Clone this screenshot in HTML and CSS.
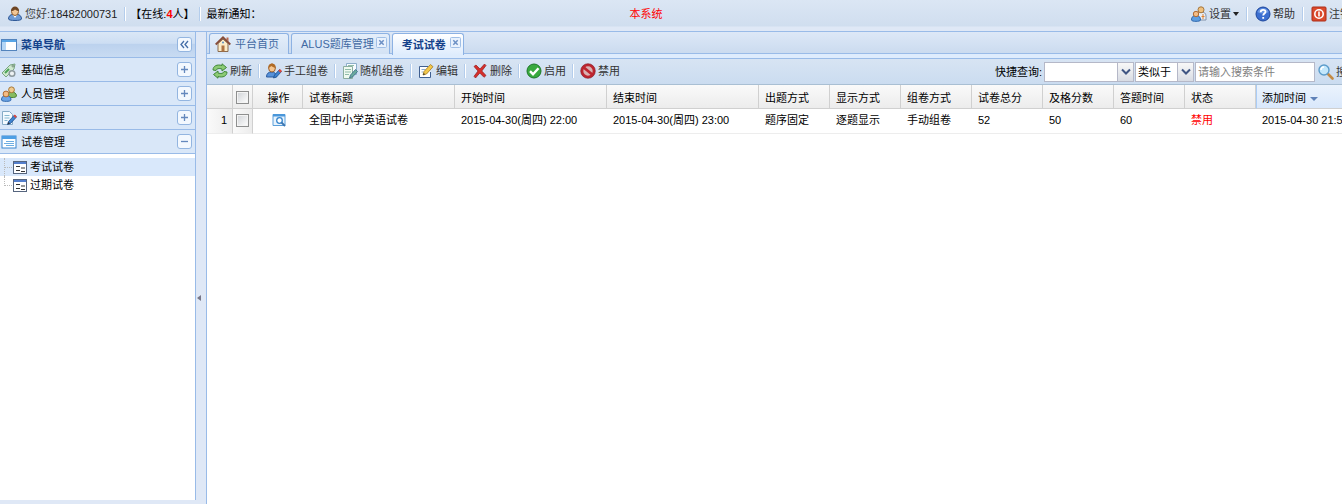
FILE: index.html
```html
<!DOCTYPE html>
<html lang="zh-CN">
<head>
  <meta charset="UTF-8">
  <meta name="viewport" content="width=device-width, initial-scale=1.0">
  <title>考试试卷</title>
  <link rel="stylesheet" href="styles.css">
</head>
<body>
  <svg class="sprite" aria-hidden="true">
    <symbol id="i-user" viewBox="0 0 16 16">
      <path d="M1.500 13c0-3 2-4.500 4-4.500h5c2 0 4 1.500 4 4.500 0 2-13 2-13 0z" fill="#6f9cd6" stroke="#2d5796"/>
      <path d="M6 9l2 3 2-3z" fill="#fff"/>
      <ellipse cx="8" cy="5.500" rx="3.500" ry="4" fill="#f3c795" stroke="#8a5a2c"/>
      <path d="M4 5c0-6 8-6 8 0-2 0-3-1-4-1.500C7 4.500 5.500 5 4 5z" fill="#6d4524"/>
    </symbol>
    <symbol id="i-users" viewBox="0 0 16 16">
      <path d="M6.500 10c0-3 1.500-4 4-4s5 1 5 4c0 2-9 2-9 0z" fill="#86bb62" stroke="#4d8433"/>
      <circle cx="10.500" cy="3.800" r="2.900" fill="#f0c98d" stroke="#a87835"/>
      <path d="M.5 14c0-3 1.500-4.500 4.500-4.500s5 1.500 5 4.500c0 1.800-9.500 1.800-9.500 0z" fill="#6ea6e6" stroke="#2f67ad"/>
      <circle cx="5" cy="8" r="2.900" fill="#f5bd85" stroke="#ae6b34"/>
    </symbol>
    <symbol id="i-setting" viewBox="0 0 16 16">
      <path d="M5 10c0-3 2-4 5-4s5 1 5 4v4H7z" fill="#e8eef5" stroke="#8292a8"/>
      <circle cx="10" cy="3.800" r="3" fill="#efc07e" stroke="#a5763d"/>
      <path d="M.5 14c0-3 1.500-4.500 4.500-4.500s4.500 1.500 4.500 4.500c0 1.800-9 1.800-9 0z" fill="#5e9ee0" stroke="#2f67ad"/>
      <circle cx="5" cy="8" r="2.700" fill="#f5bd85" stroke="#ae6b34"/>
      <path d="M12 8v5M10.500 10.500h3" stroke="#e08030"/>
    </symbol>
    <symbol id="i-help" viewBox="0 0 16 16">
      <circle cx="8" cy="8" r="7" fill="#3b6fd0" stroke="#1d469c"/>
      <path d="M2.500 6c1-5 10-5 11 0-3 2-8 2-11 0z" fill="#7ea6ea" opacity=".7"/>
      <path d="M5.700 6.200c0-3.200 4.800-3 4.800-.4 0 1.700-2.300 1.800-2.300 3.700M8.200 11v1.800" fill="none" stroke="#fff" stroke-width="1.800"/>
    </symbol>
    <symbol id="i-power" viewBox="0 0 16 16">
      <rect x="1" y="1" width="14" height="14" rx="1" fill="#da4a2c" stroke="#ae2c17"/>
      <circle cx="8" cy="8" r="4.200" fill="none" stroke="#fff" stroke-width="1.600"/>
      <path d="M8 5.500v5" stroke="#fff" stroke-width="1.600"/>
    </symbol>
    <symbol id="i-panel" viewBox="0 0 16 16">
      <rect x=".5" y="2.500" width="15" height="11" fill="#fff" stroke="#5384bd"/>
      <path d="M1 3h14v2H1z" fill="#58a5e6"/>
      <path d="M1 5h4v8H1z" fill="#b4d6f5"/>
    </symbol>
    <symbol id="i-tag" viewBox="0 0 16 16">
      <path d="M1 11l8-8 5-1-1 5-8 8z" fill="#cfe8cf" stroke="#7aa682"/>
      <circle cx="12" cy="4" r="1" fill="#fff" stroke="#6b8b70"/>
      <circle cx="11" cy="11.500" r="2.800" fill="#eef2f4" stroke="#8d999f" stroke-width="1.500"/>
      <path d="M4 11l4-4" stroke="#4ba356" stroke-width="2"/>
    </symbol>
    <symbol id="i-docpen" viewBox="0 0 16 16">
      <path d="M1.500 1.500h7l3 3v10h-10z" fill="#f4faff" stroke="#87abc7"/>
      <path d="M3.500 5.500h5M3.500 8h5M3.500 10.500h3" stroke="#85b7d0"/>
      <path d="M6.500 14.500l1-3 6-6.500 2 2-6 6.500z" fill="#3f83cf" stroke="#1f4e8d" stroke-width=".8"/>
      <path d="M12.500 6l1.300-1.400 2 2L14.500 8z" fill="#e2473a"/>
      <path d="M6.500 14.500l1-2.500 1.500 1.500z" fill="#333"/>
    </symbol>
    <symbol id="i-form" viewBox="0 0 16 16">
      <rect x="1" y="2" width="14" height="12" fill="#fff" stroke="#3c87cf"/>
      <path d="M1 2h14v3H1z" fill="#4f9fe4"/>
      <path d="M5 7.500h8M3 9.500h10M5 11.500h8" stroke="#6eaee2"/>
    </symbol>
    <symbol id="i-leaf" viewBox="0 0 16 16">
      <rect x="1.500" y="2.500" width="13" height="12" fill="#fff" stroke="#56657e"/>
      <path d="M2 3h12v2H2z" fill="#547fcd"/>
      <path d="M4 7.500h4M4 11.500h4M9 9h4M9 12.500h4" stroke="#333"/>
    </symbol>
    <symbol id="i-home" viewBox="0 0 16 16">
      <path d="M3 7.500v8h10v-8L8 3z" fill="#fcecc8" stroke="#8b6b4d"/>
      <path d="M11.500 1.500h2v4l-2-2z" fill="#ba6a50"/>
      <path d="M.7 8.500L8 1.300l7.300 7.200" fill="none" stroke="#864c38" stroke-width="1.800"/>
      <path d="M6.500 9.500h3v6h-3z" fill="#ae7444"/>
      <circle cx="8" cy="6.500" r="1" fill="#5b92c5"/>
    </symbol>
    <symbol id="i-refresh" viewBox="0 0 16 16">
      <path d="M1 7c0-4 4-6 9-4.500V.8L14.500 4.500 10 8V6C7 5 4.500 5.500 4 7.500z" fill="#8ccb75" stroke="#41873a"/>
      <path d="M15 9c0 4-4 6-9 4.500v1.700L1.500 11.500 6 8v2c3 1 5.500.5 6-1.500z" fill="#8ccb75" stroke="#41873a"/>
    </symbol>
    <symbol id="i-userpen" viewBox="0 0 16 16">
      <path d="M.5 14c0-3.500 2-5 5-5s5 1.500 5 5z" fill="#5792da" stroke="#2a5ba0"/>
      <ellipse cx="6" cy="5" rx="3.400" ry="4" fill="#f4c590" stroke="#9c602d"/>
      <path d="M2.500 5C2-1 10-1 9.500 5 7.500 4.500 6 3.500 5.500 3z" fill="#b06b25"/>
      <path d="M7.500 15l1-3 5-5.500 2 2-5 5.500z" fill="#3f83cf" stroke="#1f4e8d" stroke-width=".8"/>
      <path d="M12.300 7.700L14 6l2 2-1.700 1.700z" fill="#e2473a"/>
    </symbol>
    <symbol id="i-docs" viewBox="0 0 16 16">
      <path d="M4.500.5h10v11h-10z" fill="#f7fbff" stroke="#8caec9"/>
      <path d="M1.500 3.500h9v12h-9z" fill="#f0faf0" stroke="#8cae9f"/>
      <path d="M3 6.500h6M3 9h6M3 11.500h4M6 2.500h6" stroke="#90bca9"/>
      <path d="M7.500 15l1-3 5-5.500 2 2-5 5.500z" fill="#6aaa9c" stroke="#396b86" stroke-width=".8"/>
    </symbol>
    <symbol id="i-edit" viewBox="0 0 16 16">
      <path d="M10 3.500H1.500v11h11V9" fill="#fff" stroke="#3f5f91"/>
      <path d="M3.500 6.500h4M3.500 9h2" stroke="#91abc9"/>
      <path d="M5 12l1-3.500 6.500-7 2.500 2.200L8.500 11z" fill="#f3c84b" stroke="#a47a1e" stroke-width=".8"/>
      <path d="M5 12l.7-2 1.500 1.300z" fill="#333"/>
    </symbol>
    <symbol id="i-delete" viewBox="0 0 16 16">
      <path d="M2 3.500L4 2l4 4 4.500-5L14 2.500 9.800 8l4.200 4.500-2 1.800-4.200-4.300L3.500 15 2 13.300 6 8z" fill="#d52f2b" stroke="#951b1d" stroke-width=".7"/>
    </symbol>
    <symbol id="i-ok" viewBox="0 0 16 16">
      <circle cx="8" cy="8" r="7" fill="#38a93e" stroke="#1c7728"/>
      <path d="M4 8.200l3 3 5.500-6" fill="none" stroke="#fff" stroke-width="2.400"/>
    </symbol>
    <symbol id="i-ban" viewBox="0 0 16 16">
      <circle cx="8" cy="8" r="6" fill="#d9b1b2" stroke="#bd2630" stroke-width="2.600"/>
      <path d="M3.800 4.500l8.400 7" stroke="#bd2630" stroke-width="2.800"/>
      <circle cx="8" cy="8" r="7.300" fill="none" stroke="#851620" stroke-width=".6"/>
    </symbol>
    <symbol id="i-search" viewBox="0 0 16 16">
      <path d="M9.500 9.500l5 5" stroke="#c48b44" stroke-width="2.600" stroke-linecap="round"/>
      <circle cx="6" cy="6" r="5" fill="#c3e7fb" stroke="#5c9cca" stroke-width="1.400"/>
      <path d="M3 6c0-2 1.500-3 3-3" fill="none" stroke="#fff" stroke-width="1.400"/>
    </symbol>
    <symbol id="i-view" viewBox="0 0 16 16">
      <path d="M2 2.500h12v11H2z" fill="#e8f3fd" stroke="#5a9fda"/>
      <path d="M2 2h12v2.500H2z" fill="#4a97da"/>
      <circle cx="8.500" cy="8.500" r="2.800" fill="#fff" stroke="#3685cc" stroke-width="1.300"/>
      <path d="M10.500 10.500l3.500 3.500" stroke="#3c76b0" stroke-width="1.800"/>
    </symbol>
    <symbol id="i-close" viewBox="0 0 11 11">
      <rect x=".5" y=".5" width="10" height="10" rx="1" fill="#e9f2fd" stroke="#a0bfe6"/>
      <path d="M3.300 3.300l4.400 4.400M7.700 3.300L3.300 7.700" stroke="#6c90c4" stroke-width="1.500"/>
    </symbol>
    <symbol id="i-collapse" viewBox="0 0 15 15">
      <rect x=".5" y=".5" width="14" height="14" rx="2.500" fill="#f3f8fe" stroke="#93b5e0"/>
      <path d="M7 4L4 7.500 7 11M11 4L8 7.500 11 11" fill="none" stroke="#456ea8" stroke-width="1.300"/>
    </symbol>
    <symbol id="i-plus" viewBox="0 0 15 15">
      <rect x=".5" y=".5" width="14" height="14" rx="2.500" fill="#f3f8fe" stroke="#93b5e0"/>
      <path d="M4 7.500h7M7.500 4v7" stroke="#6488bd" stroke-width="1.300"/>
    </symbol>
    <symbol id="i-minus" viewBox="0 0 15 15">
      <rect x=".5" y=".5" width="14" height="14" rx="2.500" fill="#f3f8fe" stroke="#93b5e0"/>
      <path d="M4 7.500h7" stroke="#6488bd" stroke-width="1.300"/>
    </symbol>
    <symbol id="i-arrow" viewBox="0 0 10 8">
      <path d="M1 1.500l4 4 4-4" fill="none" stroke="#3f5583" stroke-width="2"/>
    </symbol>
  </svg>

  <div class="app">
    <header class="topbar">
      <svg class="icon"><use href="#i-user"/></svg>
      <span class="hello">您好:<b>18482000731</b></span>
      <span class="sep"></span>
      <span class="online">【在线:<b>4</b>人】</span>
      <span class="sep"></span>
      <span class="notice-label">最新通知：</span>
      <span class="notice">本系统</span>
      <button class="btn"><svg class="icon"><use href="#i-setting"/></svg>设置<i class="caret"></i></button>
      <span class="sep"></span>
      <button class="btn"><svg class="icon"><use href="#i-help"/></svg>帮助</button>
      <span class="sep"></span>
      <button class="btn"><svg class="icon"><use href="#i-power"/></svg>注销</button>
    </header>

    <div class="body">
      <aside class="sidebar">
        <div class="side-title">
          <svg class="icon"><use href="#i-panel"/></svg>
          <span>菜单导航</span>
          <button class="tool" aria-label="收起"><svg><use href="#i-collapse"/></svg></button>
        </div>
        <button class="acc"><svg class="icon"><use href="#i-tag"/></svg><span>基础信息</span><svg class="sign"><use href="#i-plus"/></svg></button>
        <button class="acc"><svg class="icon"><use href="#i-users"/></svg><span>人员管理</span><svg class="sign"><use href="#i-plus"/></svg></button>
        <button class="acc"><svg class="icon"><use href="#i-docpen"/></svg><span>题库管理</span><svg class="sign"><use href="#i-plus"/></svg></button>
        <button class="acc"><svg class="icon"><use href="#i-form"/></svg><span>试卷管理</span><svg class="sign"><use href="#i-minus"/></svg></button>
        <ul class="tree">
          <li class="selected"><a href="#"><i class="elbow"></i><svg class="icon"><use href="#i-leaf"/></svg>考试试卷</a></li>
          <li><a href="#"><i class="elbow end"></i><svg class="icon"><use href="#i-leaf"/></svg>过期试卷</a></li>
        </ul>
      </aside>

      <div class="splitter"><i></i></div>

      <main class="main">
        <nav class="tabs">
          <a class="tab home" href="#"><svg class="icon"><use href="#i-home"/></svg>平台首页</a>
          <a class="tab" href="#">ALUS题库管理<svg class="close"><use href="#i-close"/></svg></a>
          <a class="tab active" href="#">考试试卷<svg class="close"><use href="#i-close"/></svg></a>
        </nav>

        <div class="toolbar">
          <button class="btn"><svg class="icon"><use href="#i-refresh"/></svg>刷新</button>
          <span class="sep"></span>
          <button class="btn"><svg class="icon"><use href="#i-userpen"/></svg>手工组卷</button>
          <span class="sep"></span>
          <button class="btn"><svg class="icon"><use href="#i-docs"/></svg>随机组卷</button>
          <span class="sep"></span>
          <button class="btn"><svg class="icon"><use href="#i-edit"/></svg>编辑</button>
          <span class="sep"></span>
          <button class="btn"><svg class="icon"><use href="#i-delete"/></svg>删除</button>
          <span class="sep"></span>
          <button class="btn"><svg class="icon"><use href="#i-ok"/></svg>启用</button>
          <span class="sep"></span>
          <button class="btn"><svg class="icon"><use href="#i-ban"/></svg>禁用</button>

          <div class="query">
            <label for="field">快捷查询:</label>
            <div class="combo field">
              <select id="field"><option></option></select>
              <span class="trigger"><svg><use href="#i-arrow"/></svg></span>
            </div>
            <div class="combo oper">
              <select aria-label="条件"><option>类似于</option></select>
              <span class="trigger"><svg><use href="#i-arrow"/></svg></span>
            </div>
            <input type="text" class="keyword" aria-label="搜索条件" placeholder="请输入搜索条件">
            <button class="btn"><svg class="icon"><use href="#i-search"/></svg>搜索</button>
          </div>
        </div>

        <div class="grid">
          <table>
            <colgroup>
              <col class="c-num"><col class="c-check"><col class="c-op">
              <col class="c-wide"><col class="c-wide"><col class="c-wide">
              <col class="c-std"><col class="c-std"><col class="c-std"><col class="c-std"><col class="c-std"><col class="c-std"><col class="c-std">
              <col>
            </colgroup>
            <thead>
              <tr>
                <th></th>
                <th class="check"><input type="checkbox" aria-label="全选"></th>
                <th class="op">操作</th>
                <th>试卷标题</th>
                <th>开始时间</th>
                <th>结束时间</th>
                <th>出题方式</th>
                <th>显示方式</th>
                <th>组卷方式</th>
                <th>试卷总分</th>
                <th>及格分数</th>
                <th>答题时间</th>
                <th>状态</th>
                <th class="sorted">添加时间<i class="sort"></i></th>
              </tr>
            </thead>
            <tbody>
              <tr>
                <td class="num">1</td>
                <td class="check"><input type="checkbox" aria-label="选择第1行"></td>
                <td class="op"><svg class="icon"><use href="#i-view"/></svg></td>
                <td>全国中小学英语试卷</td>
                <td>2015-04-30(周四) 22:00</td>
                <td>2015-04-30(周四) 23:00</td>
                <td>题序固定</td>
                <td>逐题显示</td>
                <td>手动组卷</td>
                <td>52</td>
                <td>50</td>
                <td>60</td>
                <td class="off">禁用</td>
                <td>2015-04-30 21:55</td>
              </tr>
            </tbody>
          </table>
        </div>
      </main>
    </div>
  </div>
</body>
</html>
```
FILE: styles.css
```css
:root {
  --line: #99bbe8;
  --blue: #15428b;
}
* {
  box-sizing: border-box;
}
body {
  margin: 0;
  overflow: hidden;
  font: 11px/16px "Liberation Sans", "Noto Sans CJK SC", sans-serif;
  color: #000;
}
button, select, input {
  font: inherit;
  color: inherit;
}
a {
  color: inherit;
  text-decoration: none;
}
.sprite {
  position: absolute;
  width: 0;
  height: 0;
}
.icon {
  width: 16px;
  height: 16px;
  flex: none;
}
/* the shell is a little wider than the window */
.app {
  display: flex;
  flex-direction: column;
  height: 100vh;
  margin-right: -24px;
  background: #dfe8f6;
}

/* top bar */
.topbar {
  display: flex;
  align-items: center;
  height: 32px;
  padding: 0 12px 4px 7px;
  background: linear-gradient(#dbe6f4, #d0deef 26px, #dfe8f6 27px);
  border-bottom: 1px solid var(--line);
  white-space: nowrap;
}
.hello {
  margin: 0 3px 0 2px;
  color: #444;
}
.hello b {
  font-weight: normal;
  color: #222;
}
.online b {
  color: #f00;
}
.notice-label {
  margin-left: 2px;
}
.notice {
  flex: 1;
  margin-left: 368px;
  color: #f00;
}
.sep {
  width: 2px;
  height: 14px;
  margin: 0 3px;
  border-left: 1px solid #b4cdec;
  border-right: 1px solid #fff;
}
.topbar .sep {
  margin: 0 4px;
}
.btn {
  display: flex;
  align-items: center;
  gap: 2px;
  padding: 0 3px;
  border: 0;
  background: none;
  color: #333;
  white-space: nowrap;
}
.caret {
  border: 3px solid transparent;
  border-top: 4px solid #222;
  border-bottom: 0;
}

/* layout */
.body {
  flex: 1;
  display: flex;
  min-height: 0;
}
.sidebar {
  display: flex;
  flex-direction: column;
  width: 196px;
  margin-bottom: 4px;
  background: #fff;
  border-right: 1px solid var(--line);
}
.side-title, .acc {
  display: flex;
  align-items: center;
  gap: 4px;
  width: 100%;
  height: 24px;
  padding: 0 3px 0 1px;
  border: 0;
  border-bottom: 1px solid var(--line);
  background: #d9e7f8;
  text-align: left;
}
.side-title {
  height: 26px;
  background: linear-gradient(#dae7f6, #cddef3 45%, #bcd2ee 50%, #c8dbf2);
  color: var(--blue);
  font-weight: bold;
}
.side-title span, .acc span {
  flex: 1;
}
.tool {
  display: flex;
  padding: 0;
  border: 0;
  background: none;
}
.tool svg, .sign {
  width: 15px;
  height: 15px;
}
.tree {
  margin: 0;
  padding: 4px 0 0;
  list-style: none;
}
.tree a {
  display: flex;
  align-items: center;
  height: 18px;
}
.tree .icon {
  margin-right: 2px;
}
.tree .selected {
  background: #d9e8fb;
}
.elbow {
  width: 8px;
  height: 18px;
  margin-left: 4px;
  border-left: 1px dotted #bbb;
  background: linear-gradient(90deg, #bbb 50%, transparent 50%) 0 9px / 2px 1px repeat-x;
}
.elbow.end {
  height: 10px;
  margin-bottom: 8px;
}
.splitter {
  display: flex;
  align-items: center;
  width: 10px;
}
.splitter i {
  margin: 60px 0 0 1px;
  border: 3px solid transparent;
  border-right: 4px solid #778;
  border-left: 0;
}
.main {
  flex: 1;
  display: flex;
  flex-direction: column;
  min-width: 0;
  background: #fff;
  border-left: 1px solid var(--line);
}

/* tabs */
.tabs {
  display: flex;
  align-items: flex-start;
  gap: 2px;
  height: 27px;
  padding: 1px 2px 0;
  background: linear-gradient(#dde8f7, #cbdbef 21px, var(--line) 21px, var(--line) 22px, #deecfd 22px);
  border-bottom: 1px solid var(--line);
}
.tab {
  display: flex;
  align-items: center;
  height: 21px;
  padding: 0 2px 0 9px;
  border: 1px solid #8db2e3;
  border-bottom: 0;
  border-radius: 3px 3px 0 0;
  background: linear-gradient(#e4eefa, #d3e2f4);
  color: #416aa3;
}
.tab.home {
  gap: 4px;
  padding: 0 9px 0 5px;
}
.tab.active {
  height: 22px;
  background: linear-gradient(#fff, #deecfd);
  color: var(--blue);
  font-weight: bold;
}
.close {
  width: 11px;
  height: 11px;
  margin: 0 0 4px 2px;
}
.tab.active .close {
  margin-left: 4px;
}

/* toolbar */
.toolbar {
  display: flex;
  align-items: center;
  height: 26px;
  padding: 0 2px 1px;
  background: linear-gradient(#d7e4f3, #cbdcf0);
  border-bottom: 1px solid #a9bfd3;
}
.query {
  display: flex;
  align-items: center;
  margin: 0 3px 0 auto;
  padding-top: 2px;
}
.query label {
  margin-right: 2px;
}
.combo {
  position: relative;
  display: flex;
  margin-right: 1px;
}
.combo.field {
  width: 90px;
}
.combo.oper {
  width: 59px;
}
.combo select, .keyword {
  appearance: none;
  width: 100%;
  height: 20px;
  padding: 0 2px;
  border: 1px solid #b5b8c8;
  border-radius: 0;
  background: #fff;
}
.trigger {
  position: absolute;
  top: 0;
  right: 0;
  display: flex;
  align-items: center;
  justify-content: center;
  width: 17px;
  height: 20px;
  border: 1px solid #b5b8c8;
  background: linear-gradient(#f8f8f8, #d8dce4);
  pointer-events: none;
}
.trigger svg {
  width: 10px;
  height: 8px;
}
.query .keyword {
  width: 120px;
}
.keyword::placeholder {
  color: #808080;
}

/* grid */
.grid {
  flex: 1;
  overflow: hidden;
}
table {
  width: 100%;
  table-layout: fixed;
  border-collapse: separate;
  border-spacing: 0;
}
.c-num { width: 26px; }
.c-check { width: 20px; }
.c-op { width: 50px; }
.c-wide { width: 152px; }
.c-std { width: 71px; }
th, td {
  height: 24px;
  padding: 0 6px;
  overflow: hidden;
  font-weight: normal;
  text-align: left;
  white-space: nowrap;
}
th {
  padding-top: 2px;
  background: linear-gradient(#fafafa, #ececec);
  border-right: 1px solid #d0d0d0;
  border-bottom: 1px solid #d0d0d0;
}
td {
  height: 25px;
  padding-bottom: 2px;
  border-bottom: 1px solid #ededed;
}
th.sorted {
  background: linear-gradient(#ebf3fd, #d9e8fb);
  border-left: 1px solid #aaccf6;
  padding-left: 5px;
}
.sort {
  display: inline-block;
  margin: 0 0 1px 4px;
  border: 4px solid transparent;
  border-top-color: #5f82b8;
  border-bottom: 0;
}
td.num, td.check {
  background: linear-gradient(90deg, #fafafa, #ececec);
  border-right: 1px solid #d0d0d0;
}
td.num {
  padding-right: 5px;
  text-align: right;
}
.check, .op {
  padding-left: 0;
  padding-right: 0;
  text-align: center;
}
.op {
  padding-left: 2px;
}
.check input {
  appearance: none;
  display: block;
  width: 13px;
  height: 13px;
  margin: 0 auto;
  border: 1px solid #8e8f8f;
  background: linear-gradient(135deg, #cfd2d6, #fff);
  box-shadow: inset 0 0 0 1px #f4f4f4;
}
td .icon {
  display: block;
  margin: 0 auto;
}
.off {
  color: #f00;
}
```
